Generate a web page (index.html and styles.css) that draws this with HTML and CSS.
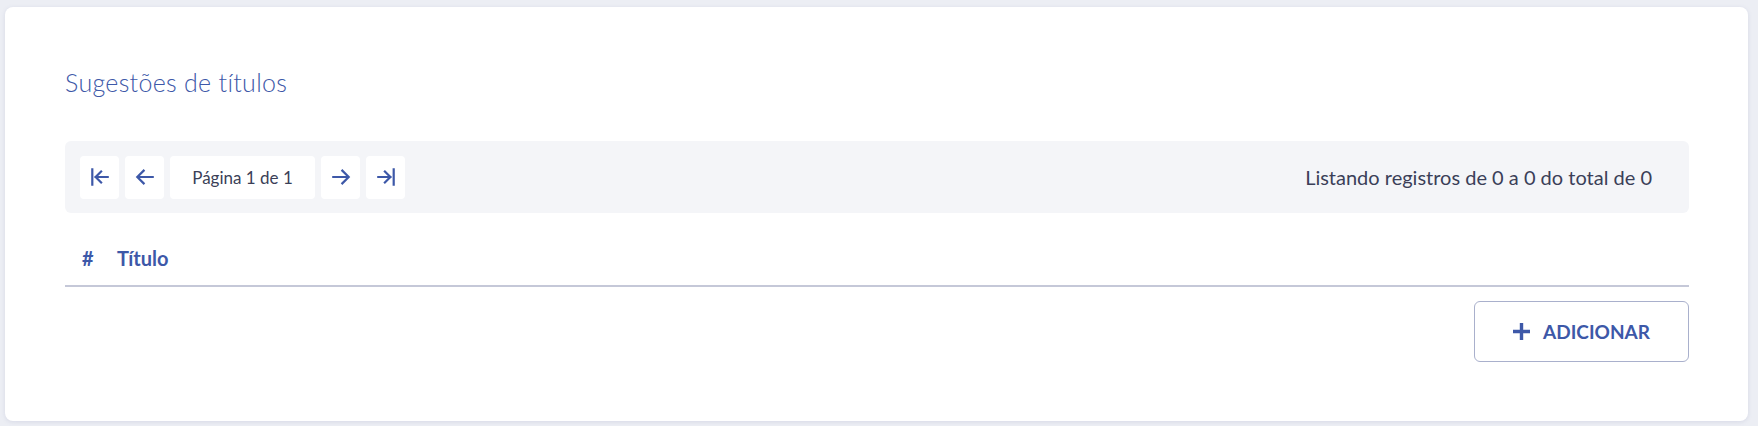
FILE: index.html
```html
<!DOCTYPE html>
<html lang="pt">
<head>
<meta charset="utf-8">
<title>Sugestões de títulos</title>
<link rel="stylesheet" href="styles.css">
</head>
<body>
<main class="card">
  <h2 class="title">Sugestões de títulos</h2>
  <div class="toolbar">
    <div class="pager">
      <button class="pbtn" aria-label="Primeira">
        <svg width="22" height="22" viewBox="0 0 20 20"><path d="M3 3v14M17 10H6M11 5l-5 5 5 5" fill="none" stroke="currentColor" stroke-width="2" stroke-linecap="square"/></svg>
      </button>
      <button class="pbtn" aria-label="Anterior">
        <svg width="22" height="22" viewBox="0 0 20 20"><path d="M18 10H3M9.5 3.5 3 10l6.5 6.5" fill="none" stroke="currentColor" stroke-width="2"/></svg>
      </button>
      <span class="plabel">Página 1 de 1</span>
      <button class="pbtn" aria-label="Próxima">
        <svg width="22" height="22" viewBox="0 0 20 20"><path d="M2 10h15M10.5 3.5 17 10l-6.5 6.5" fill="none" stroke="currentColor" stroke-width="2"/></svg>
      </button>
      <button class="pbtn" aria-label="Última">
        <svg width="22" height="22" viewBox="0 0 20 20"><path d="M17 3v14M3 10h11M9 5l5 5-5 5" fill="none" stroke="currentColor" stroke-width="2" stroke-linecap="square"/></svg>
      </button>
    </div>
    <span class="summary">Listando registros de 0 a 0 do total de 0</span>
  </div>
  <div class="thead">
    <span class="th th-num">#</span>
    <span class="th">Título</span>
  </div>
  <div class="actions">
    <button class="add">
      <svg width="17" height="17" viewBox="0 0 17 17"><path d="M8.5 0v17M0 8.5h17" stroke="currentColor" stroke-width="3.4"/></svg>
      <span>ADICIONAR</span>
    </button>
  </div>
</main>
</body>
</html>
```

FILE: styles.css
```css
html, body {
  margin: 0;
  padding: 0;
}
body {
  background: #eceef4;
  padding: 7px 10px 5px 5px;
  font-family: Lato, "Noto Sans", sans-serif;
  color: #3b3f58;
}
.card {
  background: #ffffff;
  border-radius: 8px;
  box-shadow: 0 1px 4px rgba(120, 130, 170, 0.18);
  padding: 57px 59px 59px 60px;
  height: 414px;
  box-sizing: border-box;
}
.title {
  margin: 0 0 41px 0;
  font-weight: 300;
  font-size: 25px;
  line-height: 36px;
  color: #3d58a8;
  letter-spacing: 0.3px;
}
.toolbar {
  background: #f4f5f8;
  border-radius: 6px;
  height: 72px;
  padding: 0 37px 0 15px;
  display: flex;
  align-items: center;
  justify-content: space-between;
}
.pager {
  display: flex;
  gap: 6px;
  align-items: center;
}
.pbtn {
  width: 39px;
  height: 43px;
  border: 0;
  border-radius: 4px;
  background: #ffffff;
  color: #3d58a8;
  padding: 0;
  display: flex;
  align-items: center;
  justify-content: center;
}
.plabel {
  width: 145px;
  height: 43px;
  border-radius: 4px;
  background: #ffffff;
  display: flex;
  align-items: center;
  justify-content: center;
  font-size: 17px;
  color: #3b3f58;
}
.summary {
  font-size: 20px;
  color: #3b3f58;
}
.thead {
  margin-top: 17px;
  height: 55px;
  border-bottom: 2px solid #c5c8d8;
  display: flex;
  align-items: center;
}
.th {
  font-weight: 700;
  font-size: 20px;
  color: #3d58a8;
}
.th-num {
  padding-left: 17px;
  width: 18px;
  margin-right: 17px;
}
.actions {
  display: flex;
  justify-content: flex-end;
  margin-top: 14px;
}
.add {
  width: 215px;
  height: 61px;
  border: 1px solid #a9b0cc;
  border-radius: 6px;
  background: #ffffff;
  color: #3d58a8;
  display: flex;
  align-items: center;
  justify-content: center;
  gap: 13px;
  font-family: Lato, "Noto Sans", sans-serif;
  font-weight: 700;
  font-size: 19px;
  padding: 0;
}
```
